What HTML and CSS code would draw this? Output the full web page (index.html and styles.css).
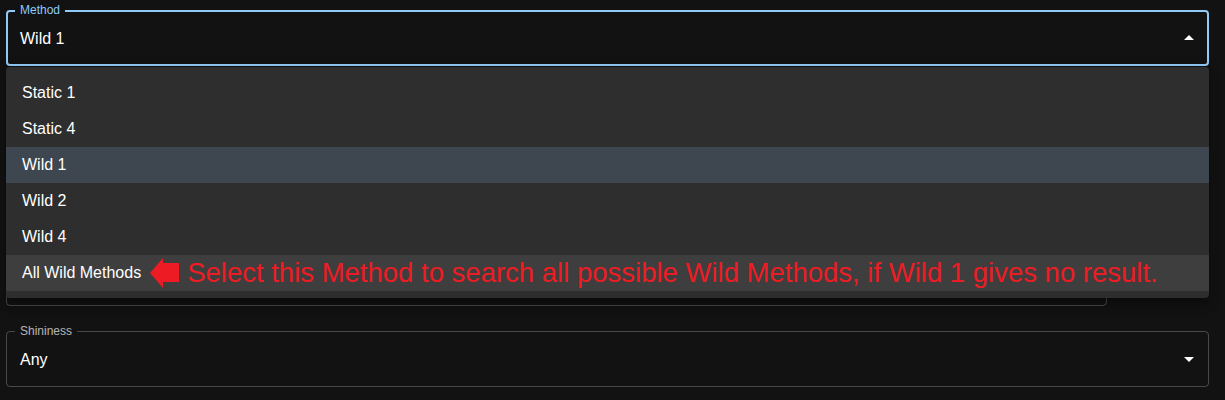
FILE: index.html
```html
<!DOCTYPE html>
<html lang="en">
<head>
<meta charset="utf-8">
<title>Method select</title>
<link rel="stylesheet" href="styles.css">
</head>
<body>
<div class="form">
  <div class="field focused">
    <span class="label">Method</span>
    <span class="value">Wild 1</span>
    <svg class="caret up" viewBox="0 0 24 24" width="24" height="24"><path d="M7 10l5 5 5-5z"/></svg>
  </div>
  <div class="field"></div>
  <div class="field"></div>
  <div class="row">
    <div class="field"></div>
    <div class="spacer"></div>
  </div>
  <div class="field last">
    <span class="label">Shininess</span>
    <span class="value">Any</span>
    <svg class="caret" viewBox="0 0 24 24" width="24" height="24"><path d="M7 10l5 5 5-5z"/></svg>
  </div>

  <ul class="menu">
    <li class="item">Static 1</li>
    <li class="item">Static 4</li>
    <li class="item selected">Wild 1</li>
    <li class="item">Wild 2</li>
    <li class="item">Wild 4</li>
    <li class="item hover">All Wild Methods
      <svg class="arrow" viewBox="0 0 30 30" width="30" height="30"><polygon points="0,15 13,0 13,5 29,5 29,24 13,24 13,30"/></svg>
      <span class="note">Select this Method to search all possible Wild Methods, if Wild 1 gives no result.</span>
    </li>
  </ul>
</div>
</body>
</html>
```
FILE: styles.css
```css
html, body {
  margin: 0;
  padding: 0;
  background: #121212;
  font-family: "Liberation Sans", Arial, sans-serif;
  color: #fff;
}
.form {
  position: relative;
  display: flex;
  flex-direction: column;
  gap: 24px;
  padding: 10px 16px 0 6px;
}
.field {
  position: relative;
  box-sizing: border-box;
  height: 56px;
  border: 1px solid rgba(255,255,255,0.23);
  border-radius: 4px;
  display: flex;
  align-items: center;
  padding: 0 7px 0 13px;
}
.field.focused {
  border: 2px solid #90caf9;
  padding: 0 6px 0 12px;
}
.field.last { margin-top: 1px; }
.label {
  position: absolute;
  left: 8px;
  top: -8px;
  padding: 0 5px;
  background: #121212;
  font-size: 12px;
  line-height: 14px;
  color: rgba(255,255,255,0.7);
}
.focused .label {
  left: 7px;
  top: -9px;
  color: #90caf9;
}
.value {
  flex: 1;
  font-size: 16px;
  line-height: 23px;
}
.caret { fill: #fff; flex: none; }
.caret.up { transform: rotate(180deg); }
.row {
  display: grid;
  grid-template-columns: 1fr 94px;
  gap: 8px;
}
.menu {
  position: absolute;
  top: 67px;
  left: 6px;
  width: 1203px;
  box-sizing: border-box;
  margin: 0;
  padding: 8px 0 7px;
  list-style: none;
  background: #2e2e2e;
  border-radius: 4px;
  box-shadow: 0 5px 5px -3px rgba(0,0,0,0.2), 0 8px 10px 1px rgba(0,0,0,0.14), 0 3px 14px 2px rgba(0,0,0,0.12);
}
.item {
  display: flex;
  align-items: center;
  height: 36px;
  box-sizing: border-box;
  padding: 0 16px;
  font-size: 16px;
  line-height: 24px;
  white-space: nowrap;
}
.item.selected { background: #3e474f; }
.item.hover { background: #3e3e3e; }
.arrow {
  fill: #ed1c24;
  margin-left: 9px;
  flex: none;
}
.note {
  margin-left: 7px;
  color: #ed1c24;
  font-size: 27.5px;
  line-height: 24px;
}
```
